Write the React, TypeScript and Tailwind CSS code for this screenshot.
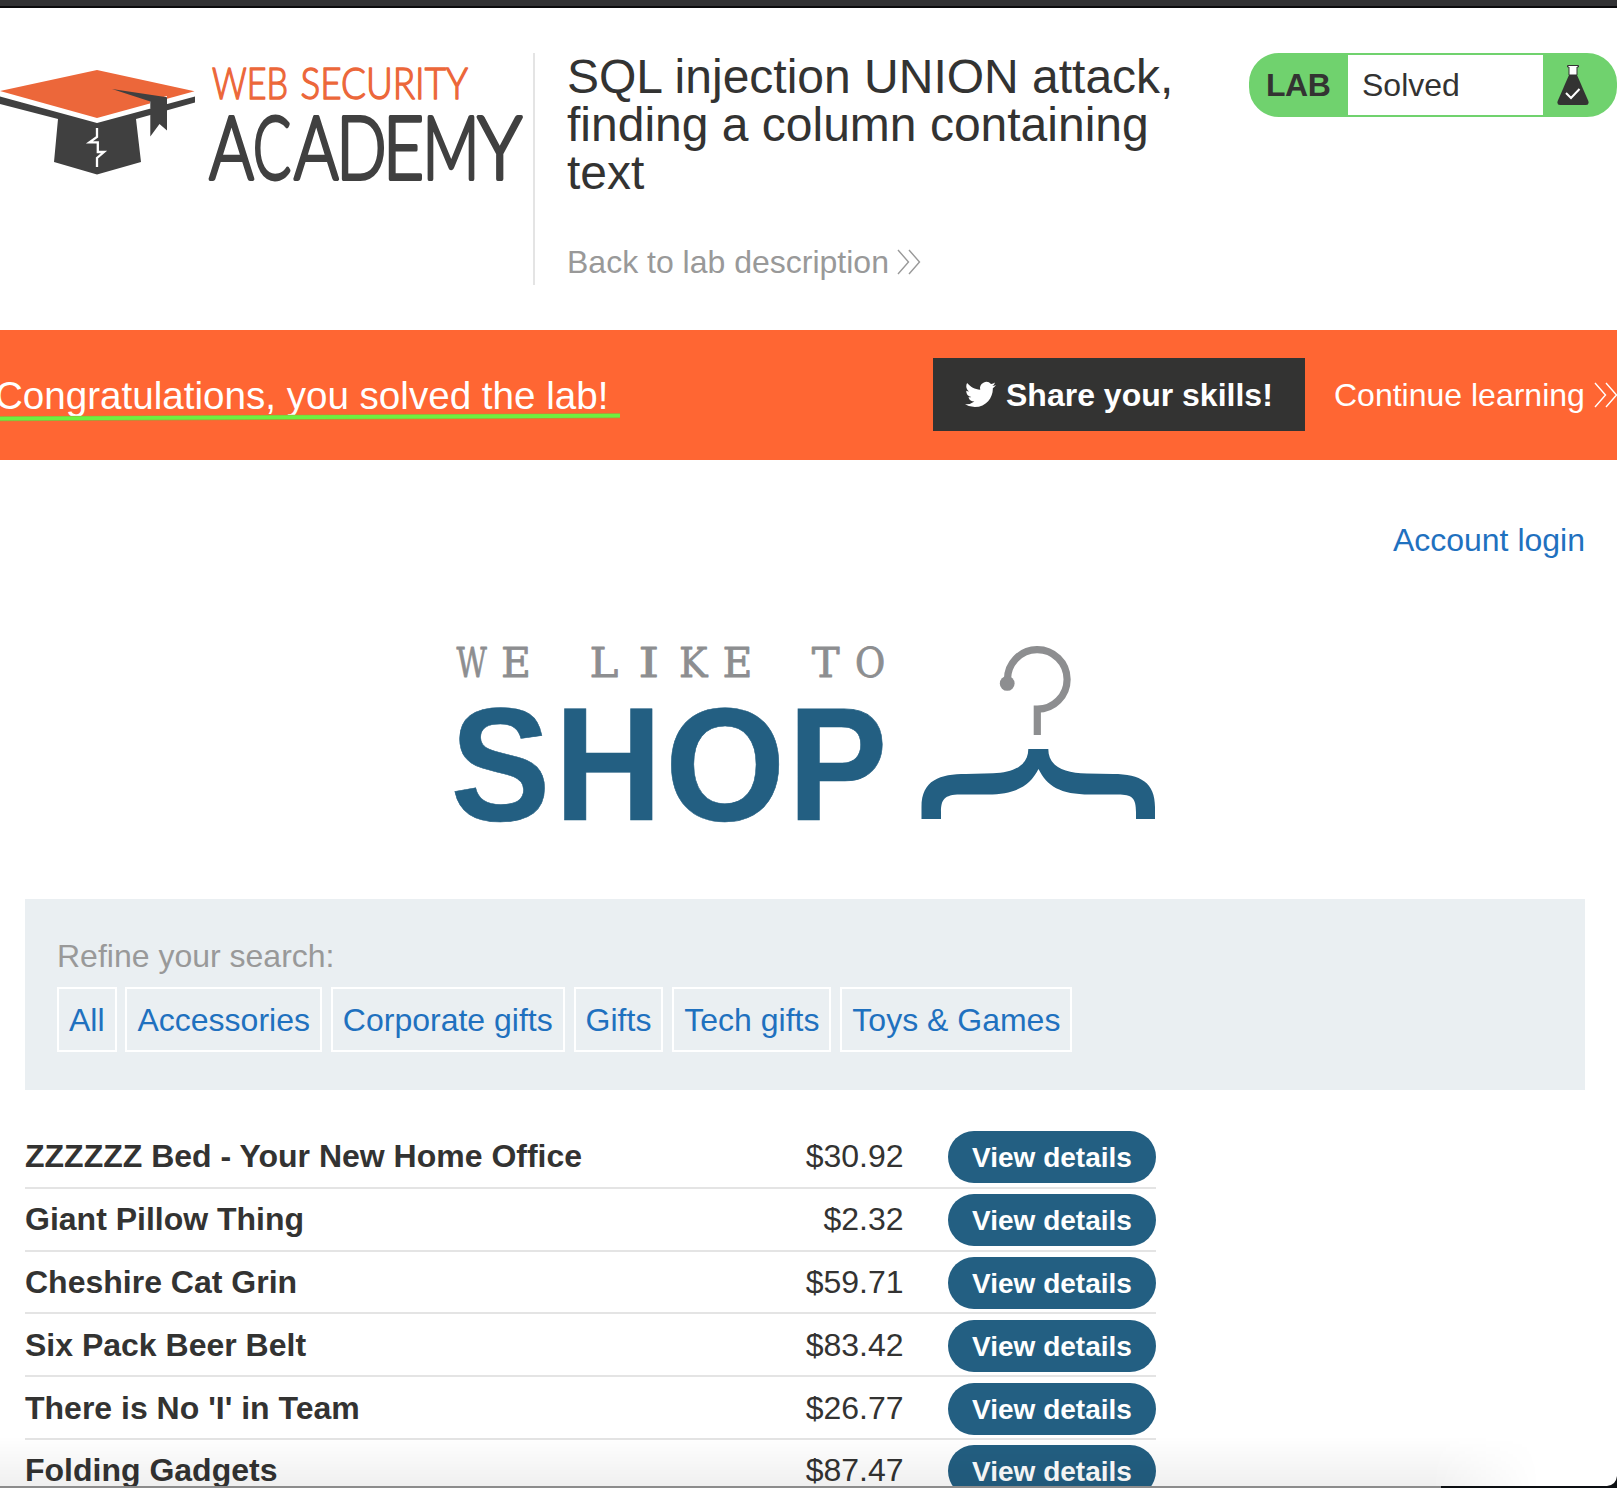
import React from "react";

const filters = ["All", "Accessories", "Corporate gifts", "Gifts", "Tech gifts", "Toys & Games"];

const products = [
  { name: "ZZZZZZ Bed - Your New Home Office", price: "$30.92" },
  { name: "Giant Pillow Thing", price: "$2.32" },
  { name: "Cheshire Cat Grin", price: "$59.71" },
  { name: "Six Pack Beer Belt", price: "$83.42" },
  { name: "There is No 'I' in Team", price: "$26.77" },
  { name: "Folding Gadgets", price: "$87.47" },
];

// letter, origin x, advance width
const academyLetters: [string, number, number][] = [
  ["A", 209.3, 44.5],
  ["C", 253, 38],
  ["A", 294, 44.5],
  ["D", 336.5, 50],
  ["E", 383, 41],
  ["M", 422.5, 57],
  ["Y", 477.5, 44.5],
];

// letter, centre x, horizontal scale
const taglineLetters: [string, number, number][] = [
  ["W", 471.7, 0.72],
  ["E", 516, 1.0],
  ["L", 604, 1.06],
  ["I", 648.7, 1.3],
  ["K", 693.3, 0.93],
  ["E", 737.5, 1.0],
  ["T", 825.7, 1.02],
  ["O", 870, 0.9],
];

// letter, origin x, horizontal scale
const shopLetters: [string, number, number][] = [
  ["S", 450.5, 0.925],
  ["H", 554.6, 0.92],
  ["O", 665.1, 0.955],
  ["P", 788, 0.92],
];

function AcademyLogo() {
  return (
    <svg className="block h-[232px] w-[533px]" viewBox="0 53 533 232">
      <path
        d="M0 96.5 L97 123 L195 96.5 V102.5 L136 119 L141 162 L97 174.5 L54 162 L58 119 L0 104 Z"
        fill="#404040"
      />
      <path d="M0 91 L97 70 L194.5 91.3 L97 118 Z" fill="#ec673a" />
      <path d="M150 101 L167 96 V104 L150 109 Z" fill="#fff" />
      <path d="M112 89 L167 97.3 V130.5 L159.5 124 L150.3 136.5 V101.5 Z" fill="#404040" />
      <path
        d="M97 128 V137 L89.5 142.3 H97.8 V152 H104 L97 158 V167"
        fill="none"
        stroke="#fff"
        strokeWidth="2.3"
      />
      <g
        fontFamily="Lato, sans-serif"
        fontSize="43"
        fontWeight="300"
        fill="#ec673a"
        stroke="#ec673a"
        strokeWidth="1.5"
        strokeLinejoin="round"
      >
        <text x="212" y="99.2" textLength="76" lengthAdjust="spacingAndGlyphs">
          WEB
        </text>
        <text x="300.5" y="99.2" textLength="167.5" lengthAdjust="spacingAndGlyphs">
          SECURITY
        </text>
      </g>
      <g
        fontFamily="Lato, sans-serif"
        fontSize="86"
        fontWeight="300"
        fill="#404040"
        stroke="#404040"
        strokeWidth="3.9"
        strokeLinejoin="round"
      >
        {academyLetters.map(([c, x, w], i) => (
          <text key={i} x={x} y="178.8" textLength={w} lengthAdjust="spacingAndGlyphs">
            {c}
          </text>
        ))}
      </g>
    </svg>
  );
}

function ShopLogo() {
  return (
    <svg className="block h-[190px] w-[720px]" viewBox="450 640 720 190">
      {taglineLetters.map(([c, x, s], i) => (
        <text
          key={i}
          transform={`translate(${x} 677) scale(${s} 1)`}
          textAnchor="middle"
          fontFamily="'DejaVu Serif', serif"
          fontSize="41"
          fill="#8d8e90"
          stroke="#8d8e90"
          strokeWidth="0.8"
          strokeLinejoin="round"
        >
          {c}
        </text>
      ))}
      {shopLetters.map(([c, x, s]) => (
        <text
          key={c}
          transform={`translate(${x} 820) scale(${s} 1)`}
          fontFamily="'Liberation Sans', Arial, sans-serif"
          fontSize="162"
          fontWeight="700"
          fill="#235f82"
          stroke="#235f82"
          strokeWidth="0.6"
        >
          {c}
        </text>
      ))}
      <g transform="translate(900 620)">
        <path d="M107.5 60 A29.8 29.8 0 1 1 137.3 89.2 V115" fill="none" stroke="#8d8e90" strokeWidth="7.2" />
        <circle cx="107.2" cy="63.4" r="7.4" fill="#8d8e90" />
        <path
          d="M128.3 129 C128.3 145 114 153 93 153.3 L66 154 C40 154 21.5 160 21.5 187 V199 H41 V192 C41 180 44 174.5 60 174.5 H88 C115 174.5 130 166 138.5 149 C147 166 160 174.5 190 174.5 H218 C232 174.5 236 178 236 192 V199 H255 V187 C255 163 241 154 213 154 L187 153.5 C163 153 148.3 146 148.3 129 Z"
          fill="#235f82"
        />
      </g>
    </svg>
  );
}

function Chevrons({ className }: { className: string }) {
  return (
    <svg className={className} viewBox="0 0 24 26" fill="none" stroke="currentColor" strokeWidth="1.4">
      <path d="M1 1 L11.5 13 L1 25 M12 1 L22.5 13 L12 25" />
    </svg>
  );
}

function Flask() {
  return (
    <svg className="h-[40px] w-[32px]" viewBox="0 0 32 40">
      <path d="M12 10 H20 L31.3 36 Q32.5 40 29 40 H3 Q-0.5 40 0.7 36 Z" fill="#333332" />
      <path d="M10.5 0.5 H21.5 V2 H20 V10 H12 V2 H10.5 Z" fill="#fff" stroke="#333332" strokeWidth="1" />
      <path d="M9 28 L14 33 L22.5 24" fill="none" stroke="#fff" strokeWidth="2" />
    </svg>
  );
}

function Bird() {
  return (
    <svg className="h-[31px] w-[31px]" viewBox="0 0 24 24" fill="#fff">
      <path d="M23.953 4.57a10 10 0 01-2.825.775 4.958 4.958 0 002.163-2.723c-.951.555-2.005.959-3.127 1.184a4.92 4.92 0 00-8.384 4.482C7.69 8.095 4.067 6.13 1.64 3.162a4.822 4.822 0 00-.666 2.475c0 1.71.87 3.213 2.188 4.096a4.904 4.904 0 01-2.228-.616v.06a4.923 4.923 0 003.946 4.827 4.996 4.996 0 01-2.212.085 4.936 4.936 0 004.604 3.417 9.867 9.867 0 01-6.102 2.105c-.39 0-.779-.023-1.17-.067a13.995 13.995 0 007.557 2.209c9.053 0 13.998-7.496 13.998-13.985 0-.21 0-.42-.015-.63A9.935 9.935 0 0024 4.59z" />
    </svg>
  );
}

export default function App() {
  return (
    <div className="relative flex h-[1488px] w-[1617px] flex-col overflow-hidden bg-white font-['Liberation_Sans',Arial,sans-serif] text-[32px] leading-[36px] text-[#333332]">
      <div className="h-2 shrink-0 border-b-2 border-[#0b0b0d] bg-[#323234]" />

      <header className="flex h-[322px] shrink-0 items-start pt-[45px]">
        <AcademyLogo />
        <div className="h-[232px] w-[683px] border-l-2 border-[#e4e4e4] pl-8">
          <h1 className="w-[640px] text-[48px] leading-[48px]">
            <span>SQL</span> injection UNION attack, finding a column containing text
          </h1>
          <a className="mt-[47px] flex items-center text-[#999]">
            Back to lab description
            <Chevrons className="ml-[8px] h-[26px] w-6" />
          </a>
        </div>
        <div className="ml-[33px] flex h-16 w-[368px] items-center overflow-hidden rounded-[30px] border-2 border-[#70d26e] bg-[#70d26e]">
          <div className="w-[97px] pl-[15px] font-bold tracking-[-0.5px]">LAB</div>
          <div className="flex h-[60px] w-[195px] items-center bg-white pl-[14px]">Solved</div>
          <div className="pl-[14px]">
            <Flask />
          </div>
        </div>
      </header>

      <section className="relative flex h-[130px] shrink-0 items-center bg-[#ff6633] text-white">
        <p className="-ml-[5px] w-[938px] shrink-0 whitespace-nowrap pt-px text-[38.6px] leading-[46px]">
          Congratulations, you solved the lab!
        </p>
        <svg className="absolute left-0 top-[80px] h-[14px] w-[630px]" viewBox="0 0 630 14">
          <path d="M0 8.7 L620 5.7" stroke="#9aa53a" strokeWidth="5" />
          <path d="M0 8.7 L620 5.7" stroke="#6ff03f" strokeWidth="3.8" />
        </svg>
        <button className="mb-[2px] flex h-[73px] w-[372px] shrink-0 items-center bg-[#333332] pl-8 font-bold">
          <Bird />
          <span className="ml-[10px] whitespace-nowrap pt-[2px]">Share your skills!</span>
        </button>
        <a className="ml-[29px] flex shrink-0 items-center whitespace-nowrap">
          Continue learning
          <Chevrons className="ml-[9px] h-[26px] w-6" />
        </a>
      </section>

      <main className="flex flex-col pl-[25px] pr-8">
        <nav className="mt-[62px] flex h-9 justify-end text-[#1f71bf]">
          <a>Account login</a>
        </nav>
        <div className="mt-[82px] pl-[425px]">
          <ShopLogo />
        </div>
        <section className="mt-[69px] h-[191px] bg-[#eaeff2] pl-8 pt-[39px]">
          <p className="text-[#999]">Refine your search:</p>
          <div className="mt-[13px] flex gap-[8.9px] text-[#1f71bf]">
            {filters.map((f) => (
              <a key={f} className="flex h-[65px] items-center whitespace-nowrap border-2 border-white px-[10px]">
                {f}
              </a>
            ))}
          </div>
        </section>
        <section className="mt-[36px] w-[1131px]">
          {products.map((p) => (
            <div key={p.name} className="flex h-[62.8px] items-center border-b-2 border-[#e4e4e4]">
              <span className="flex-1 whitespace-nowrap font-bold">{p.name}</span>
              <span className="mr-[44.5px]">{p.price}</span>
              <button className="mt-[2px] h-[52px] w-[208px] rounded-[26px] bg-[#235f82] pt-[2px] text-[28px] font-bold leading-none text-white">
                View details
              </button>
            </div>
          ))}
        </section>
      </main>

      <div className="absolute bottom-[2px] left-0 h-[50px] w-[1540px] bg-linear-to-b from-black/0 to-black/6 [mask-image:linear-gradient(to_right,black_93%,transparent)]" />
      <div className="absolute bottom-0 left-0 flex h-[2px] w-full">
        <div className="w-[1441px] bg-[#8c8c8c]" />
        <div className="flex-1 bg-[#0c0f12]" />
      </div>
      <svg className="absolute bottom-[2px] right-0 h-[10px] w-[10px]" viewBox="0 0 10 10">
        <path d="M10 0 V10 H0 Q9 9 10 0 Z" fill="#0c0f12" />
      </svg>
    </div>
  );
}
